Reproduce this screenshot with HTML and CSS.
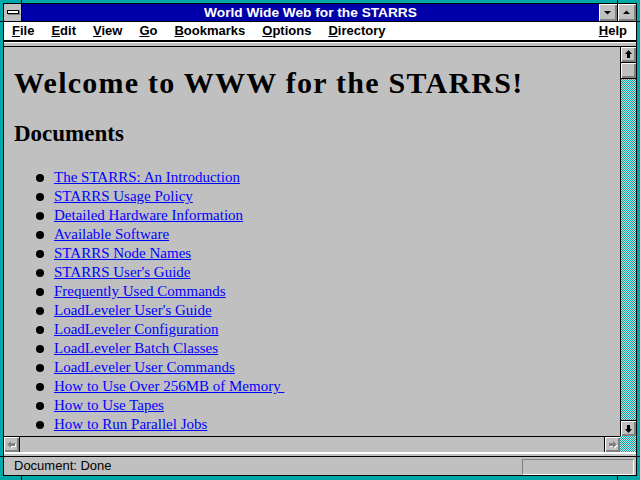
FILE: index.html
```html
<!DOCTYPE html>
<html lang="en">
<head>
	<meta charset="UTF-8">
	<title>World Wide Web for the STARRS</title>
	<link rel="stylesheet" href="styles.css">
</head>
<body>
	<svg class="defs" width="0" height="0">
		<defs>
			<pattern id="dith" width="2" height="2" patternUnits="userSpaceOnUse">
				<rect width="2" height="2" fill="#d4dcdc"/>
				<rect width="1" height="1" fill="#00a8a8"/>
				<rect x="1" y="1" width="1" height="1" fill="#00a8a8"/>
			</pattern>
		</defs>
	</svg>
	<div class="frame">
		<!-- resize marks on the border -->
		<span class="mark mark-v" style="left:21px;top:0"></span>
		<span class="mark mark-v" style="left:617px;top:0"></span>
		<span class="mark mark-v" style="left:21px;bottom:0"></span>
		<span class="mark mark-v" style="left:617px;bottom:0"></span>
		<span class="mark mark-h" style="top:21px;left:0"></span>
		<span class="mark mark-h" style="top:21px;right:0"></span>
		<span class="mark mark-h" style="top:456px;left:0"></span>
		<span class="mark mark-h" style="top:456px;right:0"></span>

		<div class="win">
			<div class="titlebar">
				<div class="sysbox"><span class="dash"></span></div>
				<div class="caption">World Wide Web for the STARRS</div>
				<div class="tbtn">
					<svg width="18" height="17" viewBox="0 0 18 17"><polygon points="5,7 12,7 8.5,10.5"/></svg>
				</div>
				<div class="tbtn tbtn-max">
					<svg width="18" height="17" viewBox="0 0 18 17"><polygon points="5,10 12,10 8.5,6.5"/></svg>
				</div>
			</div>

			<ul class="menubar">
				<li><u>F</u>ile</li>
				<li><u>E</u>dit</li>
				<li><u>V</u>iew</li>
				<li><u>G</u>o</li>
				<li><u>B</u>ookmarks</li>
				<li><u>O</u>ptions</li>
				<li><u>D</u>irectory</li>
				<li class="help"><u>H</u>elp</li>
			</ul>
			<div class="sep"></div>

			<div class="main">
				<div class="view">
					<h1>Welcome to WWW for the STARRS!</h1>
					<h2>Documents</h2>
					<ul class="docs">
						<li><a href="#">The STARRS: An Introduction</a></li>
						<li><a href="#">STARRS Usage Policy</a></li>
						<li><a href="#">Detailed Hardware Information</a></li>
						<li><a href="#">Available Software</a></li>
						<li><a href="#">STARRS Node Names</a></li>
						<li><a href="#">STARRS User's Guide</a></li>
						<li><a href="#">Frequently Used Commands</a></li>
						<li><a href="#">LoadLeveler User's Guide</a></li>
						<li><a href="#">LoadLeveler Configuration</a></li>
						<li><a href="#">LoadLeveler Batch Classes</a></li>
						<li><a href="#">LoadLeveler User Commands</a></li>
						<li><a href="#">How to Use Over 256MB of Memory&nbsp;</a></li>
						<li><a href="#">How to Use Tapes</a></li>
						<li><a href="#">How to Run Parallel Jobs</a></li>
					</ul>
				</div>
				<div class="vscroll">
					<div class="sbtn sbtn-up">
						<svg width="15" height="15" viewBox="0 0 15 15"><polygon points="7.5,3 11,7 9,7 9,11 6,11 6,7 4,7"/></svg>
					</div>
					<div class="thumb"></div>
					<div class="track">
						<svg width="100%" height="100%"><rect width="100%" height="100%" fill="url(#dith)"/></svg>
					</div>
					<div class="sbtn sbtn-down">
						<svg width="15" height="15" viewBox="0 0 15 15"><polygon points="7.5,12 11,8 9,8 9,4 6,4 6,8 4,8"/></svg>
					</div>
				</div>
			</div>

			<div class="hrow">
				<div class="hscroll">
					<div class="sbtn sbtn-left">
						<svg width="15" height="15" viewBox="0 0 15 15">
							<polygon class="hi" points="4,8.5 8,5 8,7 12,7 12,10 8,10 8,12"/>
							<polygon class="lo" points="3,7.5 7,4 7,6 11,6 11,9 7,9 7,11"/>
						</svg>
					</div>
					<div class="htrack"></div>
					<div class="sbtn sbtn-right">
						<svg width="15" height="15" viewBox="0 0 15 15">
							<polygon class="hi" points="13,8.5 9,5 9,7 5,7 5,10 9,10 9,12"/>
							<polygon class="lo" points="12,7.5 8,4 8,6 4,6 4,9 8,9 8,11"/>
						</svg>
					</div>
				</div>
				<div class="corner">
					<svg width="16" height="16"><rect width="16" height="16" fill="url(#dith)"/></svg>
				</div>
			</div>
			<div class="sep sep-bottom"></div>

			<div class="status">
				<span class="status-text">Document: Done</span>
				<span class="status-box"></span>
			</div>
		</div>
	</div>
</body>
</html>
```

FILE: styles.css
```css
*{
	margin: 0;
	padding: 0;
	box-sizing: border-box;
}
ul{
	list-style: none;
}
body{
	width: 640px;
	height: 480px;
	overflow: hidden;
	background: #00a8a8;
}
.defs{
	position: absolute;
	width: 0;
	height: 0;
}
.frame{
	position: relative;
	width: 640px;
	height: 480px;
	padding: 3px 3px 4px 3px;
	background: #00a8a8;
}
.mark{
	position: absolute;
	background: #000;
}
.mark-v{
	width: 1px;
	height: 4px;
}
.mark-h{
	width: 4px;
	height: 1px;
}
.win{
	display: flex;
	flex-direction: column;
	height: 100%;
	border: 1px solid #000;
	background: #c0c0c0;
}

/* title bar */
.titlebar{
	display: flex;
	height: 18px;
	border-bottom: 1px solid #000;
	background: #0000a8;
}
.sysbox{
	display: flex;
	align-items: center;
	justify-content: center;
	width: 18px;
	border-right: 1px solid #000;
	background: #c0c0c0;
}
.dash{
	display: block;
	width: 12px;
	height: 4px;
	margin-top: -1px;
	border: 1px solid #000;
	background: #fff;
	box-shadow: 1px 1px 0 #808080;
}
.caption{
	flex: 1;
	text-align: center;
	color: #fff;
	font-family: "Liberation Sans", Arial, sans-serif;
	font-weight: bold;
	font-size: 13.7px;
	line-height: 17px;
}
.tbtn{
	width: 18px;
	height: 17px;
	background: #c0c0c0;
	box-shadow: inset 1px 1px 0 #fff, inset -2px -2px 0 #808080;
}
.tbtn-max{
	width: 19px;
	border-left: 1px solid #000;
}
.tbtn svg{
	display: block;
}

/* menu */
.menubar{
	display: flex;
	gap: 17px;
	height: 20px;
	padding: 0 9px 0 8px;
	border-bottom: 2px solid #000;
	background: #fff;
	font-family: "Liberation Sans", Arial, sans-serif;
	font-weight: bold;
	font-size: 13px;
	line-height: 18px;
	color: #000;
}
.menubar .help{
	margin-left: auto;
}
.sep{
	height: 5px;
	border-top: 1px solid #fff;
	border-bottom: 1px solid #000;
	background: #c0c0c0;
}
.sep-bottom{
	border-top-width: 2px;
}

/* document view */
.main{
	display: flex;
	height: 389px;
}
.view{
	flex: 1;
	overflow: hidden;
	padding: 19px 10px 0 10px;
	font-family: "Liberation Serif", "Times New Roman", serif;
	color: #000;
}
.view h1{
	font-size: 30px;
	letter-spacing: 1.25px;
	line-height: 34px;
}
.view h2{
	margin-top: 21px;
	font-size: 23px;
	line-height: 26px;
}
.docs{
	margin-top: 21px;
}
.docs li{
	display: flex;
	align-items: center;
	gap: 10px;
	padding-left: 22px;
	font-size: 15px;
	line-height: 19px;
	white-space: pre;
}
.docs li:before{
	content: "";
	width: 8px;
	height: 8px;
	border-radius: 50%;
	background: #000;
}
.docs a{
	color: #0000ff;
	text-decoration: underline;
}

/* scroll bars */
.vscroll{
	display: flex;
	flex-direction: column;
	width: 16px;
	border-left: 1px solid #000;
}
.sbtn{
	width: 15px;
	height: 15px;
	background: #c0c0c0;
	box-shadow: inset 1px 1px 0 #fff, inset -2px -2px 0 #808080;
}
.sbtn svg{
	display: block;
}
.sbtn-up{
	height: 16px;
	border-bottom: 1px solid #000;
}
.thumb{
	height: 16px;
	border-bottom: 1px solid #000;
	background: #c0c0c0;
	box-shadow: inset 1px 1px 0 #fff, inset -2px -2px 0 #808080;
}
.track{
	flex: 1;
	overflow: hidden;
}
.track svg,
.corner svg{
	display: block;
	shape-rendering: crispEdges;
}
.sbtn-down{
	height: 16px;
	border-top: 1px solid #000;
}
.hrow{
	display: flex;
	height: 16px;
}
.hscroll{
	flex: 1;
	display: flex;
	border-top: 1px solid #000;
}
.sbtn-left{
	width: 16px;
	border-right: 1px solid #000;
}
.sbtn-right{
	width: 16px;
	border-left: 1px solid #000;
}
.htrack{
	flex: 1;
	background: #c0c0c0;
}
.sbtn .lo{
	fill: #808080;
}
.sbtn .hi{
	fill: #fff;
}
.corner{
	width: 16px;
}

/* status bar */
.status{
	display: flex;
	flex: 1;
	padding: 0 2px 0 10px;
	font-family: "Liberation Sans", Arial, sans-serif;
	font-size: 13px;
	line-height: 18px;
	color: #000;
}
.status-box{
	width: 112px;
	height: 16px;
	margin: 2px 0 0 auto;
	border-top: 1px solid #808080;
	border-left: 1px solid #808080;
	border-bottom: 1px solid #fff;
	border-right: 1px solid #fff;
}
```
